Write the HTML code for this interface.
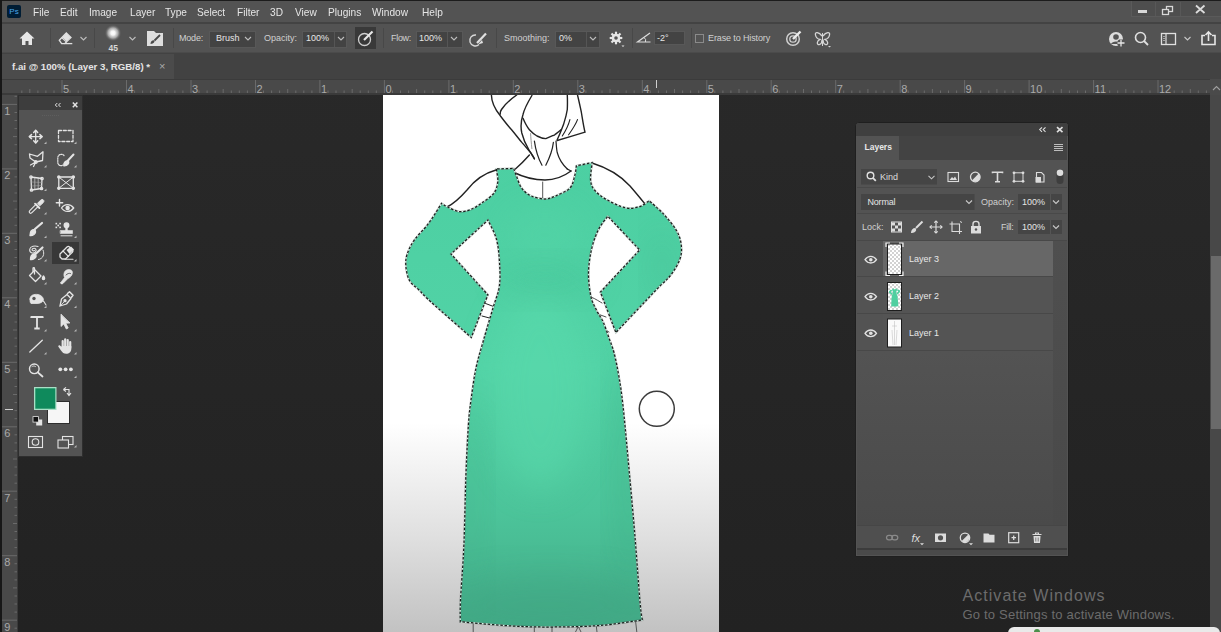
<!DOCTYPE html>
<html><head><meta charset="utf-8">
<style>
*{margin:0;padding:0;box-sizing:border-box}
html,body{width:1221px;height:632px;overflow:hidden;background:linear-gradient(#292929 0,#282828 150px,#222 632px);font-family:"Liberation Sans",sans-serif;color:#d6d6d6}
.a{position:absolute}
.t{position:absolute;white-space:nowrap;line-height:1}
#menubar{left:0;top:0;width:1221px;height:23px;background:#535353;border-top:1px solid #1c1c1c;border-left:2px solid #1a1a1a}
#sep1{left:0;top:22px;width:1221px;height:2px;background:#434343}
#opts{left:0;top:24px;width:1221px;height:28px;background:#535353;border-left:2px solid #1a1a1a}
#tabbar{left:0;top:52px;width:1221px;height:27px;background:#424242;border-left:2px solid #1a1a1a}
#tab{left:2px;top:54px;width:172px;height:25px;background:#4b4b4b}
#hruler{left:0;top:79px;width:1210px;height:16px;background:#494949;border-bottom:1px solid #3a3a3a}
#vruler{left:0;top:95px;width:18px;height:537px;background:#494949;border-left:2px solid #1a1a1a}
#canvas{left:383px;top:95px;width:336px;height:537px;background:linear-gradient(#fff 0,#fff 328px,#e0e0e0 440px,#c2c2c2 537px)}
.menu{font-size:11px;color:#e6e6e6;top:7px;transform:scaleX(0.92);transform-origin:0 0}
.lbl{font-size:10px;color:#d0d0d0}
.box{position:absolute;background:#454545;border:1px solid #4a4a4a}
.vsep{position:absolute;width:1px;background:#484848;top:28px;height:20px}
</style></head><body>
<div id="menubar" class="a"></div>
<div id="sep1" class="a"></div>
<div id="opts" class="a"></div>
<div id="tabbar" class="a"></div><div class="a" style="left:2px;top:52px;width:1219px;height:1px;background:#4b4b4b"></div>
<div id="tab" class="a"></div>
<div id="hruler" class="a"></div><div class="a" style="left:0;top:79px;width:1221px;height:1px;background:#3b3b3b"></div><div class="a" style="left:1210px;top:79px;width:11px;height:16px;background:#4a4a4a"></div><svg class="a" style="left:1210px;top:79px" width="11" height="16"><path d="M3 11 L6.5 7.5 L10 11" stroke="#a0a0a0" stroke-width="1.1" fill="none"/></svg>
<div id="vruler" class="a"></div>
<div id="canvas" class="a"></div>
<!-- rulers -->
<svg class="a" style="left:0;top:79px" width="1210" height="16" viewBox="0 79 1210 16">
<rect x="0" y="93" width="1210" height="2" fill="#3a3a3a"/>
<path d="M21.8 90.5 V93 M29.8 89 V93 M37.9 90.5 V93 M45.9 90.5 V93 M54.0 90.5 V93 M62.0 80 V93 M70.1 90.5 V93 M78.2 90.5 V93 M86.2 90.5 V93 M94.3 89 V93 M102.3 90.5 V93 M110.4 90.5 V93 M118.5 90.5 V93 M126.5 80 V93 M134.6 90.5 V93 M142.6 90.5 V93 M150.7 90.5 V93 M158.8 89 V93 M166.8 90.5 V93 M174.9 90.5 V93 M182.9 90.5 V93 M191.0 80 V93 M199.0 90.5 V93 M207.1 90.5 V93 M215.2 90.5 V93 M223.2 89 V93 M231.3 90.5 V93 M239.3 90.5 V93 M247.4 90.5 V93 M255.5 80 V93 M263.5 90.5 V93 M271.6 90.5 V93 M279.6 90.5 V93 M287.7 89 V93 M295.8 90.5 V93 M303.8 90.5 V93 M311.9 90.5 V93 M319.9 80 V93 M328.0 90.5 V93 M336.0 90.5 V93 M344.1 90.5 V93 M352.2 89 V93 M360.2 90.5 V93 M368.3 90.5 V93 M376.3 90.5 V93 M384.4 80 V93 M392.5 90.5 V93 M400.5 90.5 V93 M408.6 90.5 V93 M416.6 89 V93 M424.7 90.5 V93 M432.8 90.5 V93 M440.8 90.5 V93 M448.9 80 V93 M456.9 90.5 V93 M465.0 90.5 V93 M473.0 90.5 V93 M481.1 89 V93 M489.2 90.5 V93 M497.2 90.5 V93 M505.3 90.5 V93 M513.3 80 V93 M521.4 90.5 V93 M529.5 90.5 V93 M537.5 90.5 V93 M545.6 89 V93 M553.6 90.5 V93 M561.7 90.5 V93 M569.8 90.5 V93 M577.8 80 V93 M585.9 90.5 V93 M593.9 90.5 V93 M602.0 90.5 V93 M610.0 89 V93 M618.1 90.5 V93 M626.2 90.5 V93 M634.2 90.5 V93 M642.3 80 V93 M650.3 90.5 V93 M658.4 90.5 V93 M666.5 90.5 V93 M674.5 89 V93 M682.6 90.5 V93 M690.6 90.5 V93 M698.7 90.5 V93 M706.8 80 V93 M714.8 90.5 V93 M722.9 90.5 V93 M730.9 90.5 V93 M739.0 89 V93 M747.0 90.5 V93 M755.1 90.5 V93 M763.2 90.5 V93 M771.2 80 V93 M779.3 90.5 V93 M787.3 90.5 V93 M795.4 90.5 V93 M803.5 89 V93 M811.5 90.5 V93 M819.6 90.5 V93 M827.6 90.5 V93 M835.7 80 V93 M843.7 90.5 V93 M851.8 90.5 V93 M859.9 90.5 V93 M867.9 89 V93 M876.0 90.5 V93 M884.0 90.5 V93 M892.1 90.5 V93 M900.2 80 V93 M908.2 90.5 V93 M916.3 90.5 V93 M924.3 90.5 V93 M932.4 89 V93 M940.5 90.5 V93 M948.5 90.5 V93 M956.6 90.5 V93 M964.6 80 V93 M972.7 90.5 V93 M980.7 90.5 V93 M988.8 90.5 V93 M996.9 89 V93 M1004.9 90.5 V93 M1013.0 90.5 V93 M1021.0 90.5 V93 M1029.1 80 V93 M1037.2 90.5 V93 M1045.2 90.5 V93 M1053.3 90.5 V93 M1061.3 89 V93 M1069.4 90.5 V93 M1077.5 90.5 V93 M1085.5 90.5 V93 M1093.6 80 V93 M1101.6 90.5 V93 M1109.7 90.5 V93 M1117.7 90.5 V93 M1125.8 89 V93 M1133.9 90.5 V93 M1141.9 90.5 V93 M1150.0 90.5 V93 M1158.0 80 V93 M1166.1 90.5 V93 M1174.2 90.5 V93 M1182.2 90.5 V93 M1190.3 89 V93 M1198.3 90.5 V93 M1206.4 90.5 V93" stroke="#6b6b6b" stroke-width="1" fill="none"/>
<g font-family="Liberation Sans" font-size="11" fill="#aaaaaa"><text x="63.0" y="93">5</text><text x="127.5" y="93">4</text><text x="192.0" y="93">3</text><text x="256.5" y="93">2</text><text x="320.9" y="93">1</text><text x="385.4" y="93">0</text><text x="449.9" y="93">1</text><text x="514.3" y="93">2</text><text x="578.8" y="93">3</text><text x="643.3" y="93">4</text><text x="707.7" y="93">5</text><text x="772.2" y="93">6</text><text x="836.7" y="93">7</text><text x="901.2" y="93">8</text><text x="965.6" y="93">9</text><text x="1030.1" y="93">10</text><text x="1094.6" y="93">11</text><text x="1159.0" y="93">12</text></g>
<path d="M656.5 80 V88" stroke="#cfcfcf" stroke-width="1"/>
<path d="M1213 91 L1216.5 87.5 L1220 91" stroke="#9a9a9a" stroke-width="1" fill="none"/>
</svg>
<svg class="a" style="left:0;top:95px" width="18" height="537" viewBox="0 95 18 537">
<rect x="17" y="95" width="1" height="537" fill="#3a3a3a"/>
<path d="M14.5 96.3 H17 M2 104.4 H17 M14.5 112.5 H17 M14.5 120.5 H17 M14.5 128.6 H17 M13 136.6 H17 M14.5 144.7 H17 M14.5 152.8 H17 M14.5 160.8 H17 M2 168.9 H17 M14.5 176.9 H17 M14.5 185.0 H17 M14.5 193.0 H17 M13 201.1 H17 M14.5 209.2 H17 M14.5 217.2 H17 M14.5 225.3 H17 M2 233.3 H17 M14.5 241.4 H17 M14.5 249.5 H17 M14.5 257.5 H17 M13 265.6 H17 M14.5 273.6 H17 M14.5 281.7 H17 M14.5 289.8 H17 M2 297.8 H17 M14.5 305.9 H17 M14.5 313.9 H17 M14.5 322.0 H17 M13 330.0 H17 M14.5 338.1 H17 M14.5 346.2 H17 M14.5 354.2 H17 M2 362.3 H17 M14.5 370.3 H17 M14.5 378.4 H17 M14.5 386.5 H17 M13 394.5 H17 M14.5 402.6 H17 M14.5 410.6 H17 M14.5 418.7 H17 M2 426.8 H17 M14.5 434.8 H17 M14.5 442.9 H17 M14.5 450.9 H17 M13 459.0 H17 M14.5 467.0 H17 M14.5 475.1 H17 M14.5 483.2 H17 M2 491.2 H17 M14.5 499.3 H17 M14.5 507.3 H17 M14.5 515.4 H17 M13 523.5 H17 M14.5 531.5 H17 M14.5 539.6 H17 M14.5 547.6 H17 M2 555.7 H17 M14.5 563.7 H17 M14.5 571.8 H17 M14.5 579.9 H17 M13 587.9 H17 M14.5 596.0 H17 M14.5 604.0 H17 M14.5 612.1 H17 M2 620.2 H17 M14.5 628.2 H17" stroke="#6b6b6b" stroke-width="1" fill="none"/>
<g font-family="Liberation Sans" font-size="11" fill="#aaaaaa"><text x="4.2" y="114.7">1</text><text x="4.2" y="179.2">2</text><text x="4.2" y="243.6">3</text><text x="4.2" y="308.1">4</text><text x="4.2" y="372.6">5</text><text x="4.2" y="437.1">6</text><text x="4.2" y="501.5">7</text><text x="4.2" y="566.0">8</text><text x="4.2" y="630.5">9</text></g>
<path d="M5 409.5 H13" stroke="#cfcfcf" stroke-width="1"/>
</svg>



<!-- drawing -->
<svg class="a" style="left:383px;top:95px" width="336" height="537" viewBox="383 95 336 537">
 <defs>
  <filter id="blur8" x="-50%" y="-50%" width="200%" height="200%"><feGaussianBlur stdDeviation="16"/></filter>
  <linearGradient id="dg" x1="0" y1="0" x2="0" y2="1" gradientUnits="objectBoundingBox">
   <stop offset="0" stop-color="#4ccfa2"/>
   <stop offset="0.45" stop-color="#52d3a6"/>
   <stop offset="0.75" stop-color="#4cc49a"/>
   <stop offset="1" stop-color="#43ab87"/>
  </linearGradient>
  <linearGradient id="dh" x1="0" y1="0" x2="1" y2="0" gradientUnits="objectBoundingBox">
   <stop offset="0" stop-color="#2f8f6a" stop-opacity="0"/>
   <stop offset="0.55" stop-color="#2f8f6a" stop-opacity="0"/>
   <stop offset="0.75" stop-color="#2f8f6a" stop-opacity="0.12"/>
   <stop offset="1" stop-color="#2f8f6a" stop-opacity="0"/>
  </linearGradient>
 </defs>
 <g fill="none" stroke="#222" stroke-width="1.4" stroke-linecap="round">
  <!-- hair / face -->
  <path d="M491.4 95 C491.5 101 494 108 500.3 115.8 C505 122 508 126 511.6 129.7 C516 135 519 139 521.8 142.4 C525 146 528 149.5 530.6 152.5 C532 154.5 533.5 156.5 534.4 158.8"/>
  <path d="M516.7 95 C511 99 505 104 501.5 109.5 C500.5 111 500 112.5 500.3 114"/>
  <path d="M531.9 95.5 C528 102 524.5 108 523 114.5 C520.8 121 520.5 127 521.8 133 C523.5 140 526.5 146 529 150 C531 153.5 532.5 156 534.4 158.8"/>
  <path d="M523 118.3 C525 123 527 127 529.4 129.7 C532 132.5 534.5 134.5 537 136 C540 137.5 543 138.6 545.8 138.6 C549 137.5 552 136 554.7 134.8 C557 133 559 131.5 561 129.7"/>
  <path d="M577.5 95 C579 101 580 106 581.3 112 C582.5 119 583.5 126 585 132.2 C576 135 566 138 557.2 140.5"/>
  <path d="M567.3 95 C567.5 100 567.5 105 567.3 109.5 C566.5 115 565 120 563.5 124.6 C561.5 130 559.5 135 557.2 139.8"/>
  <path d="M569.9 119.6 C568.5 125 565.5 131 562.3 136" stroke-width="1.1"/>
  <path d="M577.5 119.6 C575.5 125 572 130 568.6 134.8" stroke-width="1.1"/>
  <path d="M530.6 133.5 C530.8 138 531.3 143 531.9 148.7" stroke="#999" stroke-width="1"/>
  <path d="M534.4 141.1 C535.5 149 538 158 542 165.2" stroke-width="1.2"/>
  <path d="M553.4 142.4 C552.5 150 549.5 158 545.8 165.2" stroke-width="1.2"/>
  <path d="M556 141 C556.3 145 556.5 149 557.2 152.5 C559 159 562.5 164.5 567.3 169" stroke-width="1.2"/>
  <!-- shoulders / neckline -->
  <path d="M529.4 155 C525 160 520 165 515.4 169"/>
  <path d="M567.3 169 L571 171"/>
  <path d="M513 172 C525 178 536 180 545 180 C555 180 563 177 571 171"/>
  <path d="M542.7 182 L542.7 198" stroke-width="1" stroke="#555"/>
  <path d="M496 170 C485 173 474 181 467 190 C460 198 453 204 447 207"/>
  <path d="M592 163 C605 167 620 175 630 186 C636 193 641 199 645 204"/>
  <!-- bracelets -->
  <path d="M484.3 303 L493.8 306.6 M482 316 L491.4 318.5" stroke-width="1"/>
  <path d="M591 297 C596 299 600 302 602 303 M595 313 L606 317 M597 326 L609 332" stroke-width="0.8"/>
  <!-- legs -->
  <path d="M473.2 623 V632 M534.3 626 V632 M552 627 V632 M575.5 632 L578.3 626.5 L581 632 M596.3 626 L597 632 M635.5 620.5 L636.8 632" stroke-width="1" stroke="#555"/>
 </g>
 <clipPath id="dclip"><path d="M496.3 169.0 C496.6 171.1 498.2 177.6 497.8 181.6 C497.4 185.6 496.4 189.6 494.0 193.0 C491.6 196.4 486.9 199.4 483.1 202.1 C479.3 204.8 475.2 207.7 471.3 209.3 C467.4 210.9 463.4 212.0 459.4 211.6 C455.4 211.2 450.5 208.3 447.5 206.9 C444.5 205.5 442.6 203.9 441.6 203.3 C439.4 206.7 433.1 217.4 428.5 223.5 C423.9 229.6 417.9 234.9 414.3 240.1 C410.7 245.2 408.5 250.0 407.1 254.4 C405.7 258.8 405.5 261.9 405.9 266.3 C406.3 270.7 407.3 276.6 409.5 280.5 C411.7 284.4 415.4 286.4 419.0 290.0 C422.6 293.6 422.2 294.0 430.9 301.9 C439.6 309.8 464.6 331.6 471.3 337.5 C474.1 330.4 485.1 301.9 487.9 294.8 C481.8 288.0 457.1 260.8 451.0 254.0 C457.1 248.3 481.8 225.7 487.9 220.0 C489.3 223.1 494.4 231.8 496.3 238.6 C498.2 245.4 498.9 252.9 499.4 260.8 C499.9 268.7 500.5 278.1 499.4 286.0 C498.3 293.9 495.6 299.0 493.0 308.0 C490.4 317.0 486.4 329.9 483.6 339.9 C480.8 349.9 478.1 358.0 476.0 368.0 C473.9 378.0 472.3 390.5 471.0 400.0 C469.7 409.5 469.2 412.8 468.4 425.0 C467.6 437.2 466.8 453.0 466.0 473.0 C465.2 493.0 464.8 523.8 463.9 545.0 C463.0 566.2 461.1 587.2 460.5 600.0 C459.9 612.8 460.3 618.2 460.3 621.8 C468.9 622.5 496.4 625.1 511.8 626.0 C527.2 626.9 538.3 627.1 553.0 627.0 C567.7 626.9 585.1 626.7 600.0 625.5 C614.9 624.3 635.4 620.9 642.5 620.0 C642.1 617.5 641.5 618.8 640.3 605.0 C639.0 591.2 637.0 561.5 635.0 537.0 C633.0 512.5 630.0 480.0 628.0 458.0 C626.0 436.0 624.4 418.5 622.9 405.0 C621.4 391.5 620.5 385.7 619.0 377.0 C617.5 368.3 615.7 359.1 614.0 352.6 C612.3 346.1 610.8 343.1 609.0 338.0 C607.2 332.9 605.2 326.5 603.2 322.0 C601.2 317.5 598.9 315.2 596.9 311.0 C594.9 306.8 592.4 303.2 591.0 296.9 C589.6 290.6 588.4 281.0 588.5 273.1 C588.6 265.2 589.9 256.6 591.5 249.4 C593.1 242.2 595.6 235.5 598.3 230.0 C601.0 224.5 606.2 218.5 607.8 216.2 C613.1 221.8 634.3 244.4 639.6 250.0 C633.1 257.0 606.9 285.1 600.4 292.1 C603.0 298.8 613.3 325.8 615.9 332.5 C622.6 325.4 647.2 299.3 656.3 289.8 C665.4 280.3 666.5 280.6 670.5 275.5 C674.5 270.4 678.2 264.0 680.0 258.9 C681.8 253.7 681.8 249.3 681.2 244.6 C680.6 239.8 679.4 235.5 676.4 230.4 C673.4 225.3 667.9 218.8 663.4 213.8 C658.9 208.9 651.5 202.9 649.1 200.7 C647.5 201.7 643.6 205.4 639.6 206.6 C635.6 207.8 630.9 209.0 625.4 207.8 C619.9 206.6 611.5 202.5 606.4 199.5 C601.2 196.5 597.1 193.2 594.5 190.0 C591.9 186.8 591.0 184.6 590.6 180.0 C590.2 175.4 591.9 165.5 592.2 162.6 C589.6 163.1 579.0 165.3 576.4 165.8 C576.1 167.4 575.9 171.6 574.8 175.3 C573.7 179.0 573.2 184.6 570.0 188.0 C566.8 191.4 560.0 194.0 555.8 195.8 C551.6 197.6 549.1 199.0 545.0 199.0 C540.9 199.0 534.9 197.7 531.0 195.9 C527.1 194.1 524.0 191.2 521.6 188.0 C519.2 184.8 518.1 180.2 516.8 176.9 C515.5 173.6 514.2 169.8 513.7 168.4 C510.8 168.5 499.2 168.9 496.3 169.0 Z"/></clipPath>
 <g clip-path="url(#dclip)">
  <rect x="383" y="150" width="336" height="482" fill="url(#dg)"/>
  <ellipse cx="540" cy="390" rx="50" ry="100" fill="#5cdbad" opacity="0.5" filter="url(#blur8)"/>
  <ellipse cx="545" cy="235" rx="40" ry="30" fill="#56d5a8" opacity="0.4" filter="url(#blur8)"/>
  <ellipse cx="548" cy="280" rx="50" ry="16" fill="#40b58b" opacity="0.22" filter="url(#blur8)"/>
  <ellipse cx="628" cy="470" rx="14" ry="120" fill="#3aab82" opacity="0.35" filter="url(#blur8)"/>
  <ellipse cx="472" cy="500" rx="12" ry="100" fill="#3fae86" opacity="0.3" filter="url(#blur8)"/>
  <ellipse cx="550" cy="605" rx="110" ry="30" fill="#3d9f7e" opacity="0.35" filter="url(#blur8)"/>
  <ellipse cx="662" cy="268" rx="12" ry="40" fill="#3fb48a" opacity="0.3" filter="url(#blur8)"/>
 </g>
 <path d="M496.3 169.0 C496.6 171.1 498.2 177.6 497.8 181.6 C497.4 185.6 496.4 189.6 494.0 193.0 C491.6 196.4 486.9 199.4 483.1 202.1 C479.3 204.8 475.2 207.7 471.3 209.3 C467.4 210.9 463.4 212.0 459.4 211.6 C455.4 211.2 450.5 208.3 447.5 206.9 C444.5 205.5 442.6 203.9 441.6 203.3 C439.4 206.7 433.1 217.4 428.5 223.5 C423.9 229.6 417.9 234.9 414.3 240.1 C410.7 245.2 408.5 250.0 407.1 254.4 C405.7 258.8 405.5 261.9 405.9 266.3 C406.3 270.7 407.3 276.6 409.5 280.5 C411.7 284.4 415.4 286.4 419.0 290.0 C422.6 293.6 422.2 294.0 430.9 301.9 C439.6 309.8 464.6 331.6 471.3 337.5 C474.1 330.4 485.1 301.9 487.9 294.8 C481.8 288.0 457.1 260.8 451.0 254.0 C457.1 248.3 481.8 225.7 487.9 220.0 C489.3 223.1 494.4 231.8 496.3 238.6 C498.2 245.4 498.9 252.9 499.4 260.8 C499.9 268.7 500.5 278.1 499.4 286.0 C498.3 293.9 495.6 299.0 493.0 308.0 C490.4 317.0 486.4 329.9 483.6 339.9 C480.8 349.9 478.1 358.0 476.0 368.0 C473.9 378.0 472.3 390.5 471.0 400.0 C469.7 409.5 469.2 412.8 468.4 425.0 C467.6 437.2 466.8 453.0 466.0 473.0 C465.2 493.0 464.8 523.8 463.9 545.0 C463.0 566.2 461.1 587.2 460.5 600.0 C459.9 612.8 460.3 618.2 460.3 621.8 C468.9 622.5 496.4 625.1 511.8 626.0 C527.2 626.9 538.3 627.1 553.0 627.0 C567.7 626.9 585.1 626.7 600.0 625.5 C614.9 624.3 635.4 620.9 642.5 620.0 C642.1 617.5 641.5 618.8 640.3 605.0 C639.0 591.2 637.0 561.5 635.0 537.0 C633.0 512.5 630.0 480.0 628.0 458.0 C626.0 436.0 624.4 418.5 622.9 405.0 C621.4 391.5 620.5 385.7 619.0 377.0 C617.5 368.3 615.7 359.1 614.0 352.6 C612.3 346.1 610.8 343.1 609.0 338.0 C607.2 332.9 605.2 326.5 603.2 322.0 C601.2 317.5 598.9 315.2 596.9 311.0 C594.9 306.8 592.4 303.2 591.0 296.9 C589.6 290.6 588.4 281.0 588.5 273.1 C588.6 265.2 589.9 256.6 591.5 249.4 C593.1 242.2 595.6 235.5 598.3 230.0 C601.0 224.5 606.2 218.5 607.8 216.2 C613.1 221.8 634.3 244.4 639.6 250.0 C633.1 257.0 606.9 285.1 600.4 292.1 C603.0 298.8 613.3 325.8 615.9 332.5 C622.6 325.4 647.2 299.3 656.3 289.8 C665.4 280.3 666.5 280.6 670.5 275.5 C674.5 270.4 678.2 264.0 680.0 258.9 C681.8 253.7 681.8 249.3 681.2 244.6 C680.6 239.8 679.4 235.5 676.4 230.4 C673.4 225.3 667.9 218.8 663.4 213.8 C658.9 208.9 651.5 202.9 649.1 200.7 C647.5 201.7 643.6 205.4 639.6 206.6 C635.6 207.8 630.9 209.0 625.4 207.8 C619.9 206.6 611.5 202.5 606.4 199.5 C601.2 196.5 597.1 193.2 594.5 190.0 C591.9 186.8 591.0 184.6 590.6 180.0 C590.2 175.4 591.9 165.5 592.2 162.6 C589.6 163.1 579.0 165.3 576.4 165.8 C576.1 167.4 575.9 171.6 574.8 175.3 C573.7 179.0 573.2 184.6 570.0 188.0 C566.8 191.4 560.0 194.0 555.8 195.8 C551.6 197.6 549.1 199.0 545.0 199.0 C540.9 199.0 534.9 197.7 531.0 195.9 C527.1 194.1 524.0 191.2 521.6 188.0 C519.2 184.8 518.1 180.2 516.8 176.9 C515.5 173.6 514.2 169.8 513.7 168.4 C510.8 168.5 499.2 168.9 496.3 169.0 Z" fill="none" stroke="#3a3a3a" stroke-width="1.9" opacity="0.35"/>
 <path d="M496.3 169.0 C496.6 171.1 498.2 177.6 497.8 181.6 C497.4 185.6 496.4 189.6 494.0 193.0 C491.6 196.4 486.9 199.4 483.1 202.1 C479.3 204.8 475.2 207.7 471.3 209.3 C467.4 210.9 463.4 212.0 459.4 211.6 C455.4 211.2 450.5 208.3 447.5 206.9 C444.5 205.5 442.6 203.9 441.6 203.3 C439.4 206.7 433.1 217.4 428.5 223.5 C423.9 229.6 417.9 234.9 414.3 240.1 C410.7 245.2 408.5 250.0 407.1 254.4 C405.7 258.8 405.5 261.9 405.9 266.3 C406.3 270.7 407.3 276.6 409.5 280.5 C411.7 284.4 415.4 286.4 419.0 290.0 C422.6 293.6 422.2 294.0 430.9 301.9 C439.6 309.8 464.6 331.6 471.3 337.5 C474.1 330.4 485.1 301.9 487.9 294.8 C481.8 288.0 457.1 260.8 451.0 254.0 C457.1 248.3 481.8 225.7 487.9 220.0 C489.3 223.1 494.4 231.8 496.3 238.6 C498.2 245.4 498.9 252.9 499.4 260.8 C499.9 268.7 500.5 278.1 499.4 286.0 C498.3 293.9 495.6 299.0 493.0 308.0 C490.4 317.0 486.4 329.9 483.6 339.9 C480.8 349.9 478.1 358.0 476.0 368.0 C473.9 378.0 472.3 390.5 471.0 400.0 C469.7 409.5 469.2 412.8 468.4 425.0 C467.6 437.2 466.8 453.0 466.0 473.0 C465.2 493.0 464.8 523.8 463.9 545.0 C463.0 566.2 461.1 587.2 460.5 600.0 C459.9 612.8 460.3 618.2 460.3 621.8 C468.9 622.5 496.4 625.1 511.8 626.0 C527.2 626.9 538.3 627.1 553.0 627.0 C567.7 626.9 585.1 626.7 600.0 625.5 C614.9 624.3 635.4 620.9 642.5 620.0 C642.1 617.5 641.5 618.8 640.3 605.0 C639.0 591.2 637.0 561.5 635.0 537.0 C633.0 512.5 630.0 480.0 628.0 458.0 C626.0 436.0 624.4 418.5 622.9 405.0 C621.4 391.5 620.5 385.7 619.0 377.0 C617.5 368.3 615.7 359.1 614.0 352.6 C612.3 346.1 610.8 343.1 609.0 338.0 C607.2 332.9 605.2 326.5 603.2 322.0 C601.2 317.5 598.9 315.2 596.9 311.0 C594.9 306.8 592.4 303.2 591.0 296.9 C589.6 290.6 588.4 281.0 588.5 273.1 C588.6 265.2 589.9 256.6 591.5 249.4 C593.1 242.2 595.6 235.5 598.3 230.0 C601.0 224.5 606.2 218.5 607.8 216.2 C613.1 221.8 634.3 244.4 639.6 250.0 C633.1 257.0 606.9 285.1 600.4 292.1 C603.0 298.8 613.3 325.8 615.9 332.5 C622.6 325.4 647.2 299.3 656.3 289.8 C665.4 280.3 666.5 280.6 670.5 275.5 C674.5 270.4 678.2 264.0 680.0 258.9 C681.8 253.7 681.8 249.3 681.2 244.6 C680.6 239.8 679.4 235.5 676.4 230.4 C673.4 225.3 667.9 218.8 663.4 213.8 C658.9 208.9 651.5 202.9 649.1 200.7 C647.5 201.7 643.6 205.4 639.6 206.6 C635.6 207.8 630.9 209.0 625.4 207.8 C619.9 206.6 611.5 202.5 606.4 199.5 C601.2 196.5 597.1 193.2 594.5 190.0 C591.9 186.8 591.0 184.6 590.6 180.0 C590.2 175.4 591.9 165.5 592.2 162.6 C589.6 163.1 579.0 165.3 576.4 165.8 C576.1 167.4 575.9 171.6 574.8 175.3 C573.7 179.0 573.2 184.6 570.0 188.0 C566.8 191.4 560.0 194.0 555.8 195.8 C551.6 197.6 549.1 199.0 545.0 199.0 C540.9 199.0 534.9 197.7 531.0 195.9 C527.1 194.1 524.0 191.2 521.6 188.0 C519.2 184.8 518.1 180.2 516.8 176.9 C515.5 173.6 514.2 169.8 513.7 168.4 C510.8 168.5 499.2 168.9 496.3 169.0 Z" fill="none" stroke="#d8f5ea" stroke-width="1.2"/>
 <path d="M496.3 169.0 C496.6 171.1 498.2 177.6 497.8 181.6 C497.4 185.6 496.4 189.6 494.0 193.0 C491.6 196.4 486.9 199.4 483.1 202.1 C479.3 204.8 475.2 207.7 471.3 209.3 C467.4 210.9 463.4 212.0 459.4 211.6 C455.4 211.2 450.5 208.3 447.5 206.9 C444.5 205.5 442.6 203.9 441.6 203.3 C439.4 206.7 433.1 217.4 428.5 223.5 C423.9 229.6 417.9 234.9 414.3 240.1 C410.7 245.2 408.5 250.0 407.1 254.4 C405.7 258.8 405.5 261.9 405.9 266.3 C406.3 270.7 407.3 276.6 409.5 280.5 C411.7 284.4 415.4 286.4 419.0 290.0 C422.6 293.6 422.2 294.0 430.9 301.9 C439.6 309.8 464.6 331.6 471.3 337.5 C474.1 330.4 485.1 301.9 487.9 294.8 C481.8 288.0 457.1 260.8 451.0 254.0 C457.1 248.3 481.8 225.7 487.9 220.0 C489.3 223.1 494.4 231.8 496.3 238.6 C498.2 245.4 498.9 252.9 499.4 260.8 C499.9 268.7 500.5 278.1 499.4 286.0 C498.3 293.9 495.6 299.0 493.0 308.0 C490.4 317.0 486.4 329.9 483.6 339.9 C480.8 349.9 478.1 358.0 476.0 368.0 C473.9 378.0 472.3 390.5 471.0 400.0 C469.7 409.5 469.2 412.8 468.4 425.0 C467.6 437.2 466.8 453.0 466.0 473.0 C465.2 493.0 464.8 523.8 463.9 545.0 C463.0 566.2 461.1 587.2 460.5 600.0 C459.9 612.8 460.3 618.2 460.3 621.8 C468.9 622.5 496.4 625.1 511.8 626.0 C527.2 626.9 538.3 627.1 553.0 627.0 C567.7 626.9 585.1 626.7 600.0 625.5 C614.9 624.3 635.4 620.9 642.5 620.0 C642.1 617.5 641.5 618.8 640.3 605.0 C639.0 591.2 637.0 561.5 635.0 537.0 C633.0 512.5 630.0 480.0 628.0 458.0 C626.0 436.0 624.4 418.5 622.9 405.0 C621.4 391.5 620.5 385.7 619.0 377.0 C617.5 368.3 615.7 359.1 614.0 352.6 C612.3 346.1 610.8 343.1 609.0 338.0 C607.2 332.9 605.2 326.5 603.2 322.0 C601.2 317.5 598.9 315.2 596.9 311.0 C594.9 306.8 592.4 303.2 591.0 296.9 C589.6 290.6 588.4 281.0 588.5 273.1 C588.6 265.2 589.9 256.6 591.5 249.4 C593.1 242.2 595.6 235.5 598.3 230.0 C601.0 224.5 606.2 218.5 607.8 216.2 C613.1 221.8 634.3 244.4 639.6 250.0 C633.1 257.0 606.9 285.1 600.4 292.1 C603.0 298.8 613.3 325.8 615.9 332.5 C622.6 325.4 647.2 299.3 656.3 289.8 C665.4 280.3 666.5 280.6 670.5 275.5 C674.5 270.4 678.2 264.0 680.0 258.9 C681.8 253.7 681.8 249.3 681.2 244.6 C680.6 239.8 679.4 235.5 676.4 230.4 C673.4 225.3 667.9 218.8 663.4 213.8 C658.9 208.9 651.5 202.9 649.1 200.7 C647.5 201.7 643.6 205.4 639.6 206.6 C635.6 207.8 630.9 209.0 625.4 207.8 C619.9 206.6 611.5 202.5 606.4 199.5 C601.2 196.5 597.1 193.2 594.5 190.0 C591.9 186.8 591.0 184.6 590.6 180.0 C590.2 175.4 591.9 165.5 592.2 162.6 C589.6 163.1 579.0 165.3 576.4 165.8 C576.1 167.4 575.9 171.6 574.8 175.3 C573.7 179.0 573.2 184.6 570.0 188.0 C566.8 191.4 560.0 194.0 555.8 195.8 C551.6 197.6 549.1 199.0 545.0 199.0 C540.9 199.0 534.9 197.7 531.0 195.9 C527.1 194.1 524.0 191.2 521.6 188.0 C519.2 184.8 518.1 180.2 516.8 176.9 C515.5 173.6 514.2 169.8 513.7 168.4 C510.8 168.5 499.2 168.9 496.3 169.0 Z" fill="none" stroke="#1a1f1d" stroke-width="1.25" stroke-dasharray="2.5 1.7"/>
 <circle cx="656.8" cy="408.8" r="17.5" fill="none" stroke="#3c3c3c" stroke-width="1.5"/>
</svg>

<!-- menu -->
<div class="a" style="left:7px;top:5px;width:14px;height:13px;background:#001d34;border-radius:2px"></div>
<div class="t" style="left:9.3px;top:7.6px;font-size:8px;color:#4aa8ec;letter-spacing:0.2px">Ps</div>
<div class="t menu" style="left:32.5px">File</div>
<div class="t menu" style="left:59.5px">Edit</div>
<div class="t menu" style="left:88.5px">Image</div>
<div class="t menu" style="left:129.5px">Layer</div>
<div class="t menu" style="left:164.5px">Type</div>
<div class="t menu" style="left:196.5px">Select</div>
<div class="t menu" style="left:236.5px">Filter</div>
<div class="t menu" style="left:269.5px">3D</div>
<div class="t menu" style="left:294.5px">View</div>
<div class="t menu" style="left:327.5px">Plugins</div>
<div class="t menu" style="left:371.5px">Window</div>
<div class="t menu" style="left:421.5px">Help</div>


<!-- options bar -->
<div class="vsep" style="left:50px"></div>
<div class="vsep" style="left:94px"></div>
<div class="vsep" style="left:173px"></div>
<div class="vsep" style="left:383px"></div>
<div class="vsep" style="left:496px"></div>
<div class="vsep" style="left:632px"></div>
<div class="vsep" style="left:691px"></div>
<svg class="a" style="left:0;top:24px" width="1221" height="28" viewBox="0 24 1221 28">
 <g fill="#e6e6e6" stroke="none">
  <path d="M27 31.5 L19.5 38.5 L22 38.5 L22 45 L25.5 45 L25.5 41 L28.5 41 L28.5 45 L32 45 L32 38.5 L34.5 38.5 Z"/>
 </g>
 <g fill="none" stroke="#e0e0e0" stroke-width="1.3">
  <path d="M59.3 40.2 L66.3 33 L71 37.6 L64.6 43.6 L61.6 43.6 Z"/>
  <path d="M61.8 37.6 L66.8 42.4"/>
  <path d="M64.6 43.6 L72.3 43.6"/>
  <path d="M62.3 37.3 L66.3 33.3 L70.7 37.6 L66.7 41.6 Z" fill="#e0e0e0" stroke="none"/>
  <path d="M80.5 37 L83.5 40 L86.5 37" stroke="#bdbdbd" stroke-width="1.1"/>
  <path d="M129.5 37 L132.5 40 L135.5 37" stroke="#bdbdbd" stroke-width="1.1"/>
  </g>
 <defs><radialGradient id="ball"><stop offset="0" stop-color="#fff"/><stop offset="0.25" stop-color="#f4f4f4"/><stop offset="0.6" stop-color="#bdbdbd" stop-opacity="0.8"/><stop offset="1" stop-color="#535353" stop-opacity="0"/></radialGradient></defs>
 <circle cx="113" cy="33" r="8.5" fill="url(#ball)"/>
 <path d="M147 31 L154 31 L156 33 L163 33 L163 46 L147 46 Z" fill="#dedede"/>
 <path d="M160 35 L154.5 40.5" stroke="#484848" stroke-width="1.8" fill="none"/>
 <path d="M150.5 44 C150.5 41.5 152 40 154.3 40.3 C155 41.8 154 43.6 150.5 44 Z" fill="#484848"/>
 <rect x="209.5" y="31.5" width="46" height="16" fill="#434343" stroke="#585858"/>
 <rect x="302.5" y="31.5" width="44" height="16" fill="#434343" stroke="#585858"/>
 <line x1="334.5" y1="32" x2="334.5" y2="47" stroke="#555"/>
 <rect x="355" y="27" width="21" height="22" fill="#393939"/>
 <circle cx="364.5" cy="39.5" r="6" fill="none" stroke="#cfcfcf" stroke-width="1.3"/>
 <path d="M364 40 L372.5 31.5" stroke="#e8e8e8" stroke-width="2.2"/>
 <rect x="416.5" y="31.5" width="46" height="16" fill="#434343" stroke="#585858"/>
 <line x1="447.5" y1="32" x2="447.5" y2="47" stroke="#555"/>
 <path d="M476 35 A5.5 5.5 0 1 0 479 44.5" fill="none" stroke="#d8d8d8" stroke-width="1.4"/>
 <path d="M477 43 L486 33.5" stroke="#e0e0e0" stroke-width="2.2"/>
 <path d="M478 44.5 L482 40 L483 43 Z" fill="#e0e0e0"/>
 <rect x="555.5" y="31.5" width="44" height="16" fill="#434343" stroke="#585858"/>
 <line x1="586.5" y1="32" x2="586.5" y2="47" stroke="#555"/>
 <g transform="translate(616,38)">
  <circle r="4.3" fill="#e6e6e6"/>
  <g stroke="#e6e6e6" stroke-width="2.2"><line x1="0" y1="-6.3" x2="0" y2="6.3"/><line x1="-6.3" y1="0" x2="6.3" y2="0"/><line x1="-4.5" y1="-4.5" x2="4.5" y2="4.5"/><line x1="-4.5" y1="4.5" x2="4.5" y2="-4.5"/></g>
  <circle r="1.8" fill="#535353"/>
 </g>
 <path d="M621.5 45.5 L624.5 45.5 L623 47 Z" fill="#e6e6e6"/>
 <path d="M650 33 L637.5 42 L650.5 42" fill="none" stroke="#dcdcdc" stroke-width="1.2"/>
 <path d="M644 37.5 A4 4 0 0 1 645.5 42" fill="none" stroke="#dcdcdc" stroke-width="1"/>
 <rect x="654.5" y="31.5" width="30" height="13" fill="#434343" stroke="#585858"/>
 <rect x="695.5" y="34.5" width="8" height="8" fill="none" stroke="#8a8a8a"/>
 <circle cx="793" cy="39" r="6.3" fill="none" stroke="#d0d0d0" stroke-width="1.5"/>
 <circle cx="793" cy="39" r="3.2" fill="none" stroke="#d0d0d0" stroke-width="1.3"/>
 <path d="M793 39 L800.5 31.5" stroke="#ececec" stroke-width="2.4"/>
 <g fill="none" stroke="#d6d6d6" stroke-width="1.3">
  <path d="M822 36 C819 32 814.5 31.5 815.5 35 C816 38 818 39 820 39.5 C816.5 41 816.5 45 819.5 44.5 C821 44 822 42 822 40"/>
  <path d="M823 36 C826 32 830.5 31.5 829.5 35 C829 38 827 39 825 39.5 C828.5 41 828.5 45 825.5 44.5 C824 44 823 42 823 40"/>
  <path d="M822.5 33 L822.5 46" stroke-width="1"/>
 </g>
 <path d="M828 46 L831 46 L829.5 47.5 Z" fill="#d6d6d6"/>
 <g fill="none" stroke="#bdbdbd" stroke-width="1.1"><path d="M245 37 L248 40 L251 37"/><path d="M338 37 L341 40 L344 37"/><path d="M451 37 L454 40 L457 37"/><path d="M590 37 L593 40 L596 37"/></g>
 <!-- right side -->
 <circle cx="1116" cy="39" r="7" fill="#dcdcdc"/>
 <circle cx="1116" cy="37" r="2.8" fill="#535353"/>
 <path d="M1111 44 C1112 40.5 1120 40.5 1121 44 Z" fill="#535353"/>
 <circle cx="1121" cy="43" r="3.8" fill="#535353"/>
 <path d="M1121 39.5 L1121 46.5 M1117.5 43 L1124.5 43" stroke="#e6e6e6" stroke-width="1.3"/>
 <circle cx="1140.5" cy="37.5" r="5" fill="none" stroke="#e0e0e0" stroke-width="1.6"/>
 <path d="M1144 41 L1148 45" stroke="#e0e0e0" stroke-width="1.8"/>
 <rect x="1161.5" y="33.5" width="14" height="11" fill="none" stroke="#e0e0e0" stroke-width="1.3"/>
 <path d="M1166 34 L1166 44" stroke="#e0e0e0" stroke-width="1.2"/>
 <path d="M1163 36.5 h2 M1163 38.5 h2 M1163 40.5 h2" stroke="#bbb" stroke-width="0.8"/>
 <path d="M1184.5 37 L1187.5 40 L1190.5 37" fill="none" stroke="#c8c8c8" stroke-width="1.1"/>
 <path d="M1205 35.5 L1202 35.5 L1202 44.5 L1215 44.5 L1215 35.5 L1212 35.5" fill="none" stroke="#e6e6e6" stroke-width="1.6"/>
 <path d="M1208.5 41 L1208.5 32 M1205.5 35 L1208.5 32 L1211.5 35" fill="none" stroke="#e6e6e6" stroke-width="1.6"/>
</svg>
<div class="t lbl" style="left:108.5px;top:44px;font-size:8.5px;font-weight:bold;color:#d8d8d8">45</div>
<div class="t lbl" style="left:179px;top:34px;font-size:9px;letter-spacing:-0.2px">Mode:</div>
<div class="t lbl" style="left:216px;top:34px;font-size:9px;color:#e6e6e6">Brush</div>
<div class="t lbl" style="left:264px;top:34px;font-size:9px">Opacity:</div>
<div class="t lbl" style="left:306px;top:34px;font-size:9px;color:#e6e6e6">100%</div>
<div class="t lbl" style="left:391px;top:34px;font-size:9px;letter-spacing:-0.3px">Flow:</div>
<div class="t lbl" style="left:419px;top:34px;font-size:9px;color:#e6e6e6">100%</div>
<div class="t lbl" style="left:504px;top:34px;font-size:9px">Smoothing:</div>
<div class="t lbl" style="left:559px;top:34px;font-size:9px;color:#e6e6e6">0%</div>
<div class="t lbl" style="left:657px;top:34px;font-size:9px;color:#e6e6e6">-2°</div>
<div class="t lbl" style="left:708px;top:34px;font-size:9px;letter-spacing:-0.12px">Erase to History</div>

<!-- window controls -->
<div class="a" style="left:1131px;top:1px;width:90px;height:16px;background:#4e4e4e;border-left:1px solid #5a5a5a;border-bottom:1px solid #5a5a5a"></div>
<div class="a" style="left:1138px;top:10px;width:9px;height:3px;background:#d8d8d8"></div>
<div class="a" style="left:1155px;top:2px;width:1px;height:14px;background:#585858"></div>
<div class="a" style="left:1180px;top:2px;width:1px;height:14px;background:#585858"></div>
<svg class="a" style="left:1131px;top:0" width="90" height="18" viewBox="1131 0 90 18">
 <rect x="1166.5" y="6.5" width="6" height="5" fill="none" stroke="#d8d8d8" stroke-width="1.3"/>
 <rect x="1162.5" y="9.5" width="6" height="5" fill="#4e4e4e" stroke="#d8d8d8" stroke-width="1.3"/>
 <path d="M1196 5.5 L1204.5 13 M1204.5 5.5 L1196 13" stroke="#dcdcdc" stroke-width="1.8"/>
</svg>
<!-- tab -->
<div class="t" style="left:12px;top:62px;font-size:9.7px;font-weight:bold;color:#e4e4e4">f.ai @ 100% (Layer 3, RGB/8) *</div>
<div class="t" style="left:159px;top:61px;font-size:11px;color:#aaa">&#215;</div>

<!-- toolbox -->
<div class="a" style="left:18px;top:95px;width:65px;height:362px;background:#535353;border:1px solid #2e2e2e"></div>
<div class="a" style="left:19px;top:96px;width:63px;height:14px;background:#3d3d3d"></div>
<div class="a" style="left:52px;top:242px;width:27px;height:22px;background:#383838"></div>
<svg class="a" style="left:18px;top:95px" width="65" height="362" viewBox="18 95 65 362">
 <g fill="none" stroke="#e2e2e2" stroke-width="1.4">
  <path d="M57.3 103 L55.3 105 L57.3 107 M60.5 103 L58.5 105 L60.5 107" stroke-width="1"/>
  <path d="M72.8 102.6 L77.4 107.3 M77.4 102.6 L72.8 107.3" stroke-width="1.5"/>
 </g>
 <path d="M42 115.5 H60" stroke="#5e5e5e" stroke-width="1" stroke-dasharray="1 1"/>
 <!-- corner triangles -->
 <g fill="#b8b8b8">
  <path d="M46.5 141.5 V144 H44 Z"/><path d="M76.5 141.5 V144 H74 Z"/>
  <path d="M46.5 165 V167.5 H44 Z"/><path d="M76.5 165 V167.5 H74 Z"/>
  <path d="M46.5 188.5 V191 H44 Z"/>
  <path d="M46.5 212 V214.5 H44 Z"/><path d="M76.5 212 V214.5 H74 Z"/>
  <path d="M46.5 235.5 V238 H44 Z"/><path d="M76.5 235.5 V238 H74 Z"/>
  <path d="M46.5 259 V261.5 H44 Z"/><path d="M76.5 259 V261.5 H74 Z"/>
  <path d="M46.5 282 V284.5 H44 Z"/><path d="M76.5 282 V284.5 H74 Z"/>
  <path d="M46.5 305.5 V308 H44 Z"/><path d="M76.5 305.5 V308 H74 Z"/>
  <path d="M46.5 329 V331.5 H44 Z"/><path d="M76.5 329 V331.5 H74 Z"/>
  <path d="M46.5 352 V354.5 H44 Z"/><path d="M76.5 352 V354.5 H74 Z"/>
  <path d="M76.5 375.5 V378 H74 Z"/>
  <path d="M76.5 445 V447.5 H74 Z"/>
 </g>
 <g fill="none" stroke="#e4e4e4" stroke-width="1.3" stroke-linejoin="round" stroke-linecap="round">
  <!-- move -->
  <path d="M35.7 130.5 V142.7 M29.5 136.6 H42"/>
  <path d="M33.7 132.5 L35.7 130.3 L37.7 132.5 M33.7 140.7 L35.7 142.9 L37.7 140.7 M31.5 134.6 L29.3 136.6 L31.5 138.6 M39.9 134.6 L42.1 136.6 L39.9 138.6" stroke-width="1.5"/>
  <!-- marquee -->
  <rect x="58.5" y="130.5" width="14.5" height="11" stroke-dasharray="3 1.8"/>
  <!-- poly lasso -->
  <path d="M29.5 154 L37.5 156.3 L43 151.8 L42.5 160.5 L35.8 162 L30 158 Z"/>
  <path d="M35.8 162 L30.5 165 M35.8 162 L33.5 166.5"/>
  <circle cx="35.8" cy="162" r="1.3"/>
  <!-- quick select -->
  <path d="M64 155.5 C62 153.5 58 154 57.8 158 L57.8 162.5 C58 165.5 61 166.5 63 165" stroke-dasharray="1.1 1.1" stroke-width="1.2"/>
  <path d="M67.5 161 L73.5 154.5" stroke-width="2"/>
  <path d="M63.8 165.8 C63.5 162.5 65.5 160.5 68.5 161 C69.5 163.5 67.5 166 63.8 165.8 Z" fill="#e4e4e4"/>
  <!-- perspective crop -->
  <path d="M31 177 L42 178.5 L41.5 188.5 L31.5 190 Z"/>
  <path d="M34.8 177.5 V189.5 M38.2 178 V189" stroke-width="0.6"/>
  <path d="M31.3 182 L41.8 182.5 M31.3 186 L41.7 185.5" stroke-width="0.5" stroke="#aaa"/>
  <circle cx="31" cy="177" r="1.2"/><circle cx="42" cy="178.5" r="1.2"/><circle cx="41.5" cy="188.5" r="1.2"/><circle cx="31.5" cy="190" r="1.2"/>
  <!-- frame -->
  <rect x="58.8" y="177" width="14.5" height="11.3"/>
  <path d="M58.8 177 L73.3 188.3 M73.3 177 L58.8 188.3" stroke-width="1"/>
  <circle cx="58.8" cy="177" r="1.1" fill="#e4e4e4"/><circle cx="73.3" cy="177" r="1.1" fill="#e4e4e4"/><circle cx="58.8" cy="188.3" r="1.1" fill="#e4e4e4"/><circle cx="73.3" cy="188.3" r="1.1" fill="#e4e4e4"/>
  <!-- eyedropper -->
  <path d="M30.3 213.2 C29 212.5 29 211.5 29.8 210.6 L36.2 204.2 L38.3 206.3 L31.9 212.7 C31.3 213.3 30.8 213.4 30.3 213.2 Z" stroke-width="1.2"/>
  <path d="M35 203.6 L39.4 208" stroke-width="1.8"/>
  <path d="M37.6 203.2 L40.6 200.2 C41.6 199.2 43.1 199.2 43.6 200.2 C44.1 201 43.9 202 43.1 202.7 L40 205.6 Z" fill="#e4e4e4" stroke-width="1"/>
  <!-- spot heal -->
  <path d="M59.5 199.5 V206 M56.3 202.7 H62.7" stroke-width="1.4"/>
  <path d="M61.5 208 C64.5 203.5 70.5 203.5 73.7 208 C70.5 212.5 64.5 212.5 61.5 208 Z" stroke-width="1.3"/>
  <circle cx="67.6" cy="208" r="1.6" fill="#e4e4e4"/>
  <!-- brush -->
  <path d="M35 229 L42 223" stroke-width="2.2"/>
  <path d="M30 235.5 C30 232 31.5 229.5 34.5 229.5 C36 231 36 233 34 234.5 C32.5 235.5 31 235.7 30 235.5 Z" fill="#e4e4e4"/>
  <!-- stamp -->
  <circle cx="66.5" cy="225.2" r="2.3" fill="#e4e4e4"/>
  <path d="M66.5 227 V230.5" stroke-width="2.4"/>
  <rect x="60.5" y="230.5" width="12" height="3" fill="#e4e4e4" stroke-width="0.6"/>
  <path d="M61 235.8 H72" stroke-width="1"/>
  <g fill="#e4e4e4" stroke="none"><rect x="55.5" y="222.8" width="1.6" height="1.6"/><rect x="59.3" y="222.8" width="1.6" height="1.6"/><rect x="57.4" y="224.7" width="1.6" height="1.6"/><rect x="55.5" y="226.6" width="1.6" height="1.6"/><rect x="59.3" y="226.6" width="1.6" height="1.6"/></g>
  <!-- history brush -->
  <path d="M34.5 250.5 C32.5 251.5 31 249.5 33 248.5 C35.5 247.5 37 250 35.5 252 C33 254.5 29 252.5 29.8 249 C30.5 246 35 245.5 38 246.5" stroke-width="1.1"/>
  <path d="M35.5 254 L42.5 247.5" stroke-width="2.2"/>
  <path d="M30.5 259.5 C30.5 256 32 254 35 254 C36.5 255.5 36.5 257 34.5 258.5 C33 259.5 31.5 259.7 30.5 259.5 Z" fill="#e4e4e4"/>
  <path d="M43 250 C45 254 43 259 38.5 259.5" stroke-width="1"/>
  <!-- eraser -->
  <path d="M60 254 L67 247 C67.8 246.3 68.8 246.3 69.5 247 L72.3 249.8 C73 250.5 73 251.5 72.3 252.2 L65.5 259 L62 259 L60 257 Z"/>
  <path d="M63 251 L68.5 256.5" stroke-width="1.1"/>
  <path d="M66.5 250 L71 246.5 L74 249.5 L69.5 254 Z" fill="#e4e4e4" stroke="none"/>
  <path d="M65 259.3 H73" stroke-width="1.1"/>
  <!-- bucket -->
  <path d="M29.5 275.5 L35 270 L41 276 L35.5 281.5 Z"/>
  <path d="M33 271.5 V268.5 C33 267.5 34.5 267.5 34.5 268.5 V274"/>
  <path d="M43.5 276 C42 278 42 279.5 43.5 279.5 C45 279.5 45 278 43.5 276 Z" fill="#e4e4e4"/>
  <!-- smudge -->
  <path d="M60.8 282.5 L64.5 277.5 C63.5 275.5 63.5 272 66 270.3 C68.5 268.8 72.5 269.3 72.5 272.5 C72.5 275 70.5 277.5 68 278.5 L63 283.5 C62 284.5 60 284 60.8 282.5 Z" fill="#e4e4e4" stroke-width="0.6"/>
  <path d="M66 275 C67.5 273.5 69 273 70.5 273.5" stroke="#535353" stroke-width="0.9"/>
  <!-- dodge -->
  <path d="M30 299 C30 295 34 294 38 294.5 C41 295 43 297 43.5 299.5 C43 302 40.5 303.5 37 303.5 L31 303.5 C30 302.5 30 301 30 299 Z" fill="#e4e4e4" stroke-width="0.8"/>
  <circle cx="34" cy="298.5" r="1.7" fill="#535353" stroke="none"/>
  <path d="M43.5 301 L46 305" stroke-width="1.1"/>
  <!-- pen -->
  <path d="M60 306 L61.5 299 L67 294.5 L71 298.5 L66.5 304 Z"/>
  <path d="M67.5 293.5 L69.5 291.8 L73 295.3 L71.5 297.2" stroke-width="1.5"/>
  <path d="M60 306 L64.5 301.5" stroke-width="0.9"/>
  <circle cx="65" cy="300.7" r="1" fill="#e4e4e4"/>
  <!-- type T -->
  <path d="M31.3 318 V317 H42.7 V318 M37 317 V328 M34.3 328.5 H39.7" stroke-width="1.8" stroke-linecap="butt"/>
  <!-- path select arrow -->
  <path d="M61 314.5 L61 326.5 L63.8 324 L66.3 329 L68.2 328 L65.8 323.2 L69.6 323 Z" fill="#e4e4e4" stroke-width="0.8"/>
  <!-- line -->
  <path d="M29.8 352 L42.3 340.3" stroke-width="1.3"/>
  <!-- hand -->
  <g fill="#e4e4e4" stroke="none">
   <rect x="61.6" y="340" width="2.2" height="9" rx="1.1"/>
   <rect x="64.1" y="338.3" width="2.2" height="10" rx="1.1"/>
   <rect x="66.6" y="339" width="2.2" height="10" rx="1.1"/>
   <rect x="69.1" y="341" width="2.2" height="8" rx="1.1"/>
   <path d="M61.6 346 H71.3 V349 C71.3 352 69 353.8 66.3 353.8 C63.8 353.8 62.3 352.5 61 350.5 L58.4 346.8 C57.8 345.8 59 344.8 60 345.5 L61.6 347 Z"/>
  </g>
  <!-- zoom -->
  <circle cx="34.3" cy="368.8" r="4.8" stroke-width="1.4"/>
  <path d="M37.8 372.3 L42.5 376.5" stroke-width="1.8"/>
  <path d="M32 366.5 C33 365.8 34.5 365.8 35.5 366.5" stroke-width="0.9"/>
 </g>
 <g fill="#e4e4e4"><circle cx="60.3" cy="369.3" r="1.9"/><circle cx="65.6" cy="369.3" r="1.9"/><circle cx="70.9" cy="369.3" r="1.9"/></g>
 <!-- colors -->
 <rect x="47.5" y="401.5" width="22" height="22" fill="#f6f6f6" stroke="#2e2e2e" stroke-width="1"/>
 <rect x="34" y="387" width="22.5" height="23" fill="#a8e0c6"/>
 <rect x="35.3" y="388.3" width="20" height="20.4" fill="#0f8a5c"/>
 <path d="M63.5 389.5 L66 387.3 M63.3 389.5 L66 391.5 M63.5 389.5 H69 V395 M67 393 L69 395.5 L71 393" fill="none" stroke="#e4e4e4" stroke-width="1.1"/>
 <rect x="36.2" y="419.5" width="6" height="6" fill="#e4e4e4"/>
 <rect x="33" y="416.6" width="5.5" height="5.5" fill="#111" stroke="#e4e4e4" stroke-width="0.8"/>
 <!-- quick mask / screen mode -->
 <rect x="28.5" y="436.5" width="14" height="11" fill="none" stroke="#e4e4e4" stroke-width="1.1"/>
 <circle cx="35.5" cy="442" r="3.3" fill="none" stroke="#e4e4e4" stroke-width="1.1"/>
 <rect x="62.5" y="436.5" width="10.5" height="8" fill="none" stroke="#e4e4e4" stroke-width="1.1"/>
 <rect x="58" y="440" width="10.5" height="8" fill="#535353" stroke="#e4e4e4" stroke-width="1.1"/>
</svg>
<!-- layers panel -->
<div class="a" style="left:855px;top:122px;width:214px;height:435px;background:#535353;border:1px solid #1f1f1f;border-radius:4px 4px 0 0"></div>
<div class="a" style="left:856px;top:123px;width:212px;height:13px;background:#3f3f3f;border-radius:3px 3px 0 0"></div>
<div class="a" style="left:857px;top:136px;width:210px;height:24px;background:#434343"></div>
<div class="a" style="left:857px;top:136px;width:42px;height:24px;background:#535353"></div>
<div class="a" style="left:857px;top:187px;width:210px;height:1px;background:#494949"></div>
<div class="a" style="left:857px;top:213px;width:210px;height:1px;background:#494949"></div>
<div class="a" style="left:857px;top:240px;width:210px;height:1px;background:#484848"></div>
<div class="a" style="left:883px;top:241px;width:170px;height:35px;background:#676767"></div>
<div class="a" style="left:857px;top:276px;width:196px;height:1px;background:#484848"></div>
<div class="a" style="left:883px;top:277px;width:170px;height:36px;background:#545454"></div>
<div class="a" style="left:857px;top:313px;width:196px;height:1px;background:#484848"></div>
<div class="a" style="left:883px;top:314px;width:170px;height:36px;background:#545454"></div>
<div class="a" style="left:857px;top:350px;width:196px;height:1px;background:#484848"></div>
<div class="a" style="left:857px;top:351px;width:196px;height:174px;background:linear-gradient(#535353,#4a4a4a)"></div>
<div class="a" style="left:1053px;top:241px;width:14px;height:284px;background:linear-gradient(#4f4f4f,#494949)"></div>
<div class="a" style="left:857px;top:525px;width:210px;height:1px;background:#464646"></div>
<div class="a" style="left:857px;top:526px;width:210px;height:22px;background:#4f4f4f"></div>
<div class="a" style="left:857px;top:548px;width:210px;height:2px;background:#3c3c3c"></div>
<div class="a" style="left:857px;top:550px;width:210px;height:5px;background:#4a4a4a"></div>
<svg class="a" style="left:856px;top:123px" width="212" height="433" viewBox="856 123 212 433">
 <g fill="none" stroke="#e0e0e0">
  <path d="M1042 127.3 L1039.7 129.6 L1042 131.9 M1045.5 127.3 L1043.2 129.6 L1045.5 131.9" stroke-width="1.1"/>
  <path d="M1057 127.2 L1062.5 132.2 M1062.5 127.2 L1057 132.2" stroke-width="1.6"/>
  <path d="M1054 144.5 H1063 M1054 146.5 H1063 M1054 148.5 H1063 M1054 150.5 H1063" stroke="#bdbdbd" stroke-width="1"/>
 </g>
 <!-- kind row -->
 <rect x="861" y="169" width="76" height="15.5" fill="#454545"/>
 <circle cx="870.5" cy="175.5" r="3.3" fill="none" stroke="#e0e0e0" stroke-width="1.4"/>
 <path d="M872.8 177.8 L875.8 180.8" stroke="#e0e0e0" stroke-width="1.8"/>
 <path d="M928.5 175.8 L931.5 178.8 L934.5 175.8" fill="none" stroke="#c8c8c8" stroke-width="1.1"/>
 <rect x="948" y="172.5" width="10.5" height="9" fill="none" stroke="#dcdcdc" stroke-width="1.1"/>
 <path d="M949.5 180 L952 177 L953.5 178.5 L955 176.5 L957 180 Z" fill="#dcdcdc"/>
 <circle cx="975.3" cy="177" r="4.8" fill="none" stroke="#dcdcdc" stroke-width="1.3"/>
 <path d="M978.7 173.6 A4.8 4.8 0 0 1 971.9 180.4 Z" fill="#dcdcdc"/>
 <path d="M992.5 173.3 V172.3 H1002.5 V173.3 M997.5 172.3 V181.5 M995 181.7 H1000" fill="none" stroke="#dcdcdc" stroke-width="1.6"/>
 <rect x="1014" y="172.8" width="9" height="8.5" fill="none" stroke="#dcdcdc" stroke-width="1"/>
 <g fill="#dcdcdc"><circle cx="1014" cy="172.8" r="1.4"/><circle cx="1023" cy="172.8" r="1.4"/><circle cx="1014" cy="181.3" r="1.4"/><circle cx="1023" cy="181.3" r="1.4"/></g>
 <path d="M1036.5 172.5 H1041.5 L1044 175 V182 H1036.5 Z" fill="none" stroke="#dcdcdc" stroke-width="1.1"/>
 <rect x="1035.5" y="177" width="5.5" height="5.5" fill="#dcdcdc"/>
 <rect x="1056.5" y="169" width="7" height="15" rx="3.5" fill="#3e3e3e"/>
 <circle cx="1060" cy="172.7" r="3.3" fill="#dedede"/>
 <!-- normal row -->
 <rect x="861" y="194" width="113.5" height="16" fill="#454545"/>
 <path d="M966 200.5 L969 203.5 L972 200.5" fill="none" stroke="#c8c8c8" stroke-width="1.1"/>
 <rect x="1018" y="194" width="44" height="16" fill="#454545"/>
 <line x1="1050.5" y1="194" x2="1050.5" y2="210" stroke="#555"/>
 <path d="M1053 200.5 L1056 203.5 L1059 200.5" fill="none" stroke="#c8c8c8" stroke-width="1.1"/>
 <!-- lock row -->
 <rect x="1018" y="220" width="44" height="14" fill="#454545"/>
 <line x1="1050.5" y1="220" x2="1050.5" y2="234" stroke="#555"/>
 <path d="M1053 225.5 L1056 228.5 L1059 225.5" fill="none" stroke="#c8c8c8" stroke-width="1.1"/>
 <rect x="891.5" y="222" width="10" height="10" fill="none" stroke="#dcdcdc" stroke-width="1"/>
 <g fill="#dcdcdc"><rect x="892" y="222.5" width="3" height="3"/><rect x="898" y="222.5" width="3" height="3"/><rect x="895" y="225.5" width="3" height="3"/><rect x="892" y="228.5" width="3" height="3"/><rect x="898" y="228.5" width="3" height="3"/></g>
 <path d="M916 228 L922.5 221.5" stroke="#dcdcdc" stroke-width="2"/>
 <path d="M911 233 C911 230 912.5 228 915.5 228 C916.5 229.5 916.5 231 914.5 232.3 C913.5 233 912 233.2 911 233 Z" fill="#dcdcdc"/>
 <path d="M936 221 V233 M930 227 H942" stroke="#dcdcdc" stroke-width="1.2"/>
 <path d="M934.3 222.7 L936 221 L937.7 222.7 M934.3 231.3 L936 233 L937.7 231.3 M931.7 225.3 L930 227 L931.7 228.7 M940.3 225.3 L942 227 L940.3 228.7" fill="none" stroke="#dcdcdc" stroke-width="1.2"/>
 <path d="M952 221.5 V231.5 H962 M949.5 224 H959.5 V234" fill="none" stroke="#dcdcdc" stroke-width="1.1"/>
 <path d="M960 221.5 L962 222.5" stroke="#dcdcdc" stroke-width="1"/>
 <rect x="971" y="226" width="10" height="7.5" fill="#dcdcdc"/>
 <path d="M973 226 V224 C973 220.5 979 220.5 979 224 V226" fill="none" stroke="#dcdcdc" stroke-width="1.4"/>
 <circle cx="976" cy="229.5" r="1.2" fill="#535353"/>
 <!-- eyes -->
 <g fill="none" stroke="#e2e2e2" stroke-width="1.3">
  <path d="M865 259.7 C868 255.3 873.5 255.3 876.5 259.7 C873.5 264.1 868 264.1 865 259.7 Z"/>
  <path d="M865 296.7 C868 292.3 873.5 292.3 876.5 296.7 C873.5 301.1 868 301.1 865 296.7 Z"/>
  <path d="M865 333.3 C868 328.9 873.5 328.9 876.5 333.3 C873.5 337.7 868 337.7 865 333.3 Z"/>
 </g>
 <g fill="#e2e2e2"><circle cx="870.8" cy="259.7" r="1.8"/><circle cx="870.8" cy="296.7" r="1.8"/><circle cx="870.8" cy="333.3" r="1.8"/></g>
 <!-- thumbs -->
 <defs>
  <pattern id="chk" x="0" y="0" width="4" height="4" patternUnits="userSpaceOnUse">
   <rect width="4" height="4" fill="#ffffff"/><rect width="2" height="2" fill="#d2d2d2"/><rect x="2" y="2" width="2" height="2" fill="#d2d2d2"/>
  </pattern>
 </defs>
 <rect x="887" y="243.5" width="15" height="31.5" fill="#1e1e1e"/>
 <rect x="888" y="244.5" width="13" height="29.5" fill="url(#chk)"/>
 <path d="M886 247 V243 H890 M899 243 H903 V247 M886 271.5 V275.5 H890 M899 275.5 H903 V271.5" fill="none" stroke="#f0f0f0" stroke-width="1.2"/>
 <rect x="887" y="282" width="15" height="29" fill="#1e1e1e"/>
 <rect x="888" y="283" width="13" height="27" fill="url(#chk)"/>
 <path d="M496.3 169.0 C496.6 171.1 498.2 177.6 497.8 181.6 C497.4 185.6 496.4 189.6 494.0 193.0 C491.6 196.4 486.9 199.4 483.1 202.1 C479.3 204.8 475.2 207.7 471.3 209.3 C467.4 210.9 463.4 212.0 459.4 211.6 C455.4 211.2 450.5 208.3 447.5 206.9 C444.5 205.5 442.6 203.9 441.6 203.3 C439.4 206.7 433.1 217.4 428.5 223.5 C423.9 229.6 417.9 234.9 414.3 240.1 C410.7 245.2 408.5 250.0 407.1 254.4 C405.7 258.8 405.5 261.9 405.9 266.3 C406.3 270.7 407.3 276.6 409.5 280.5 C411.7 284.4 415.4 286.4 419.0 290.0 C422.6 293.6 422.2 294.0 430.9 301.9 C439.6 309.8 464.6 331.6 471.3 337.5 C474.1 330.4 485.1 301.9 487.9 294.8 C481.8 288.0 457.1 260.8 451.0 254.0 C457.1 248.3 481.8 225.7 487.9 220.0 C489.3 223.1 494.4 231.8 496.3 238.6 C498.2 245.4 498.9 252.9 499.4 260.8 C499.9 268.7 500.5 278.1 499.4 286.0 C498.3 293.9 495.6 299.0 493.0 308.0 C490.4 317.0 486.4 329.9 483.6 339.9 C480.8 349.9 478.1 358.0 476.0 368.0 C473.9 378.0 472.3 390.5 471.0 400.0 C469.7 409.5 469.2 412.8 468.4 425.0 C467.6 437.2 466.8 453.0 466.0 473.0 C465.2 493.0 464.8 523.8 463.9 545.0 C463.0 566.2 461.1 587.2 460.5 600.0 C459.9 612.8 460.3 618.2 460.3 621.8 C468.9 622.5 496.4 625.1 511.8 626.0 C527.2 626.9 538.3 627.1 553.0 627.0 C567.7 626.9 585.1 626.7 600.0 625.5 C614.9 624.3 635.4 620.9 642.5 620.0 C642.1 617.5 641.5 618.8 640.3 605.0 C639.0 591.2 637.0 561.5 635.0 537.0 C633.0 512.5 630.0 480.0 628.0 458.0 C626.0 436.0 624.4 418.5 622.9 405.0 C621.4 391.5 620.5 385.7 619.0 377.0 C617.5 368.3 615.7 359.1 614.0 352.6 C612.3 346.1 610.8 343.1 609.0 338.0 C607.2 332.9 605.2 326.5 603.2 322.0 C601.2 317.5 598.9 315.2 596.9 311.0 C594.9 306.8 592.4 303.2 591.0 296.9 C589.6 290.6 588.4 281.0 588.5 273.1 C588.6 265.2 589.9 256.6 591.5 249.4 C593.1 242.2 595.6 235.5 598.3 230.0 C601.0 224.5 606.2 218.5 607.8 216.2 C613.1 221.8 634.3 244.4 639.6 250.0 C633.1 257.0 606.9 285.1 600.4 292.1 C603.0 298.8 613.3 325.8 615.9 332.5 C622.6 325.4 647.2 299.3 656.3 289.8 C665.4 280.3 666.5 280.6 670.5 275.5 C674.5 270.4 678.2 264.0 680.0 258.9 C681.8 253.7 681.8 249.3 681.2 244.6 C680.6 239.8 679.4 235.5 676.4 230.4 C673.4 225.3 667.9 218.8 663.4 213.8 C658.9 208.9 651.5 202.9 649.1 200.7 C647.5 201.7 643.6 205.4 639.6 206.6 C635.6 207.8 630.9 209.0 625.4 207.8 C619.9 206.6 611.5 202.5 606.4 199.5 C601.2 196.5 597.1 193.2 594.5 190.0 C591.9 186.8 591.0 184.6 590.6 180.0 C590.2 175.4 591.9 165.5 592.2 162.6 C589.6 163.1 579.0 165.3 576.4 165.8 C576.1 167.4 575.9 171.6 574.8 175.3 C573.7 179.0 573.2 184.6 570.0 188.0 C566.8 191.4 560.0 194.0 555.8 195.8 C551.6 197.6 549.1 199.0 545.0 199.0 C540.9 199.0 534.9 197.7 531.0 195.9 C527.1 194.1 524.0 191.2 521.6 188.0 C519.2 184.8 518.1 180.2 516.8 176.9 C515.5 173.6 514.2 169.8 513.7 168.4 C510.8 168.5 499.2 168.9 496.3 169.0 Z" fill="#4fcfa0" transform="translate(894.5 288) scale(0.04) translate(-543 -162)"/>
 <rect x="887" y="318.5" width="15" height="29" fill="#1e1e1e"/>
 <rect x="888" y="319.5" width="13" height="27" fill="#fafafa"/>
 <path d="M894.5 321 V345 M892 326 H897 M892 330 L893 345 M897 330 L896 345" stroke="#b8b8b8" stroke-width="0.5"/>
 <!-- footer icons -->
 <g fill="none" stroke="#bdbdbd" stroke-width="1.2">
  <rect x="886.5" y="535.3" width="6" height="4.6" rx="2.3" stroke="#8a8a8a"/>
  <rect x="891.8" y="535.3" width="6" height="4.6" rx="2.3" stroke="#8a8a8a"/>
 </g>
 <text x="911.5" y="541.8" font-family="Liberation Sans" font-style="italic" font-size="11" fill="#dcdcdc">fx</text>
 <path d="M920 543.3 H924 L922 545.3 Z" fill="#dcdcdc"/>
 <rect x="935" y="533.5" width="11" height="8.5" fill="#dcdcdc"/>
 <circle cx="940.5" cy="537.8" r="2.6" fill="#535353"/>
 <circle cx="965" cy="537.8" r="4.7" fill="none" stroke="#dcdcdc" stroke-width="1.3"/>
 <path d="M968.3 534.5 A4.7 4.7 0 0 1 961.7 541.1 Z" fill="#dcdcdc"/>
 <path d="M969 543.3 H973 L971 545.3 Z" fill="#dcdcdc"/>
 <path d="M983.5 533.5 H988.5 L989.5 534.8 H994.5 V542.5 H983.5 Z" fill="#dcdcdc"/>
 <rect x="1008.7" y="532.7" width="10" height="10" fill="none" stroke="#dcdcdc" stroke-width="1.2"/>
 <path d="M1013.7 535.5 V540 M1011.5 537.7 H1016" stroke="#dcdcdc" stroke-width="1.3"/>
 <path d="M1032.5 534.5 H1041.5 M1035.5 534.5 V533 H1038.5 V534.5" fill="none" stroke="#dcdcdc" stroke-width="1.1"/>
 <path d="M1033.5 536 H1040.5 L1040 543 H1034 Z" fill="#dcdcdc"/>
 <path d="M1035.8 537.5 V541.5 M1038.2 537.5 V541.5" stroke="#535353" stroke-width="0.7"/>
</svg>
<div class="t" style="left:864.5px;top:142.5px;font-size:8.5px;font-weight:bold;color:#e8e8e8">Layers</div>
<div class="t lbl" style="left:880px;top:173px;font-size:9px;color:#dcdcdc">Kind</div>
<div class="t lbl" style="left:867.5px;top:198px;font-size:9px;color:#e4e4e4;letter-spacing:-0.2px">Normal</div>
<div class="t lbl" style="left:981px;top:198px;font-size:9px">Opacity:</div>
<div class="t lbl" style="left:1022px;top:198px;font-size:9px;color:#e4e4e4">100%</div>
<div class="t lbl" style="left:862px;top:223px;font-size:9px">Lock:</div>
<div class="t lbl" style="left:1001px;top:223px;font-size:9px;letter-spacing:-0.3px">Fill:</div>
<div class="t lbl" style="left:1022px;top:223px;font-size:9px;color:#e4e4e4">100%</div>
<div class="t lbl" style="left:909px;top:255px;font-size:9px;color:#e8e8e8">Layer 3</div>
<div class="t lbl" style="left:909px;top:292px;font-size:9px;color:#e8e8e8">Layer 2</div>
<div class="t lbl" style="left:909px;top:328.5px;font-size:9px;color:#e8e8e8">Layer 1</div>

<!-- scrollbar -->
<div class="a" style="left:1210px;top:95px;width:11px;height:537px;background:#484848"></div>
<div class="a" style="left:1211px;top:256px;width:10px;height:173px;background:#6a6a6a"></div>

<!-- activate windows -->
<div class="t" style="left:962.5px;top:587.5px;font-size:16px;letter-spacing:1.05px;color:#6c6c6c">Activate Windows</div>
<div class="t" style="left:962.5px;top:607.9px;font-size:13px;letter-spacing:0.2px;color:#6c6c6c">Go to Settings to activate Windows.</div>
<div class="a" style="left:1008px;top:627px;width:212px;height:12px;background:#e9e9e9;border-radius:6px"></div>
<div class="a" style="left:1034px;top:629px;width:6px;height:3px;background:#4a8f4a;border-radius:3px 3px 0 0"></div>
<div class="a" style="left:0;top:0;width:2px;height:632px;background:#171717"></div>
</body></html>
